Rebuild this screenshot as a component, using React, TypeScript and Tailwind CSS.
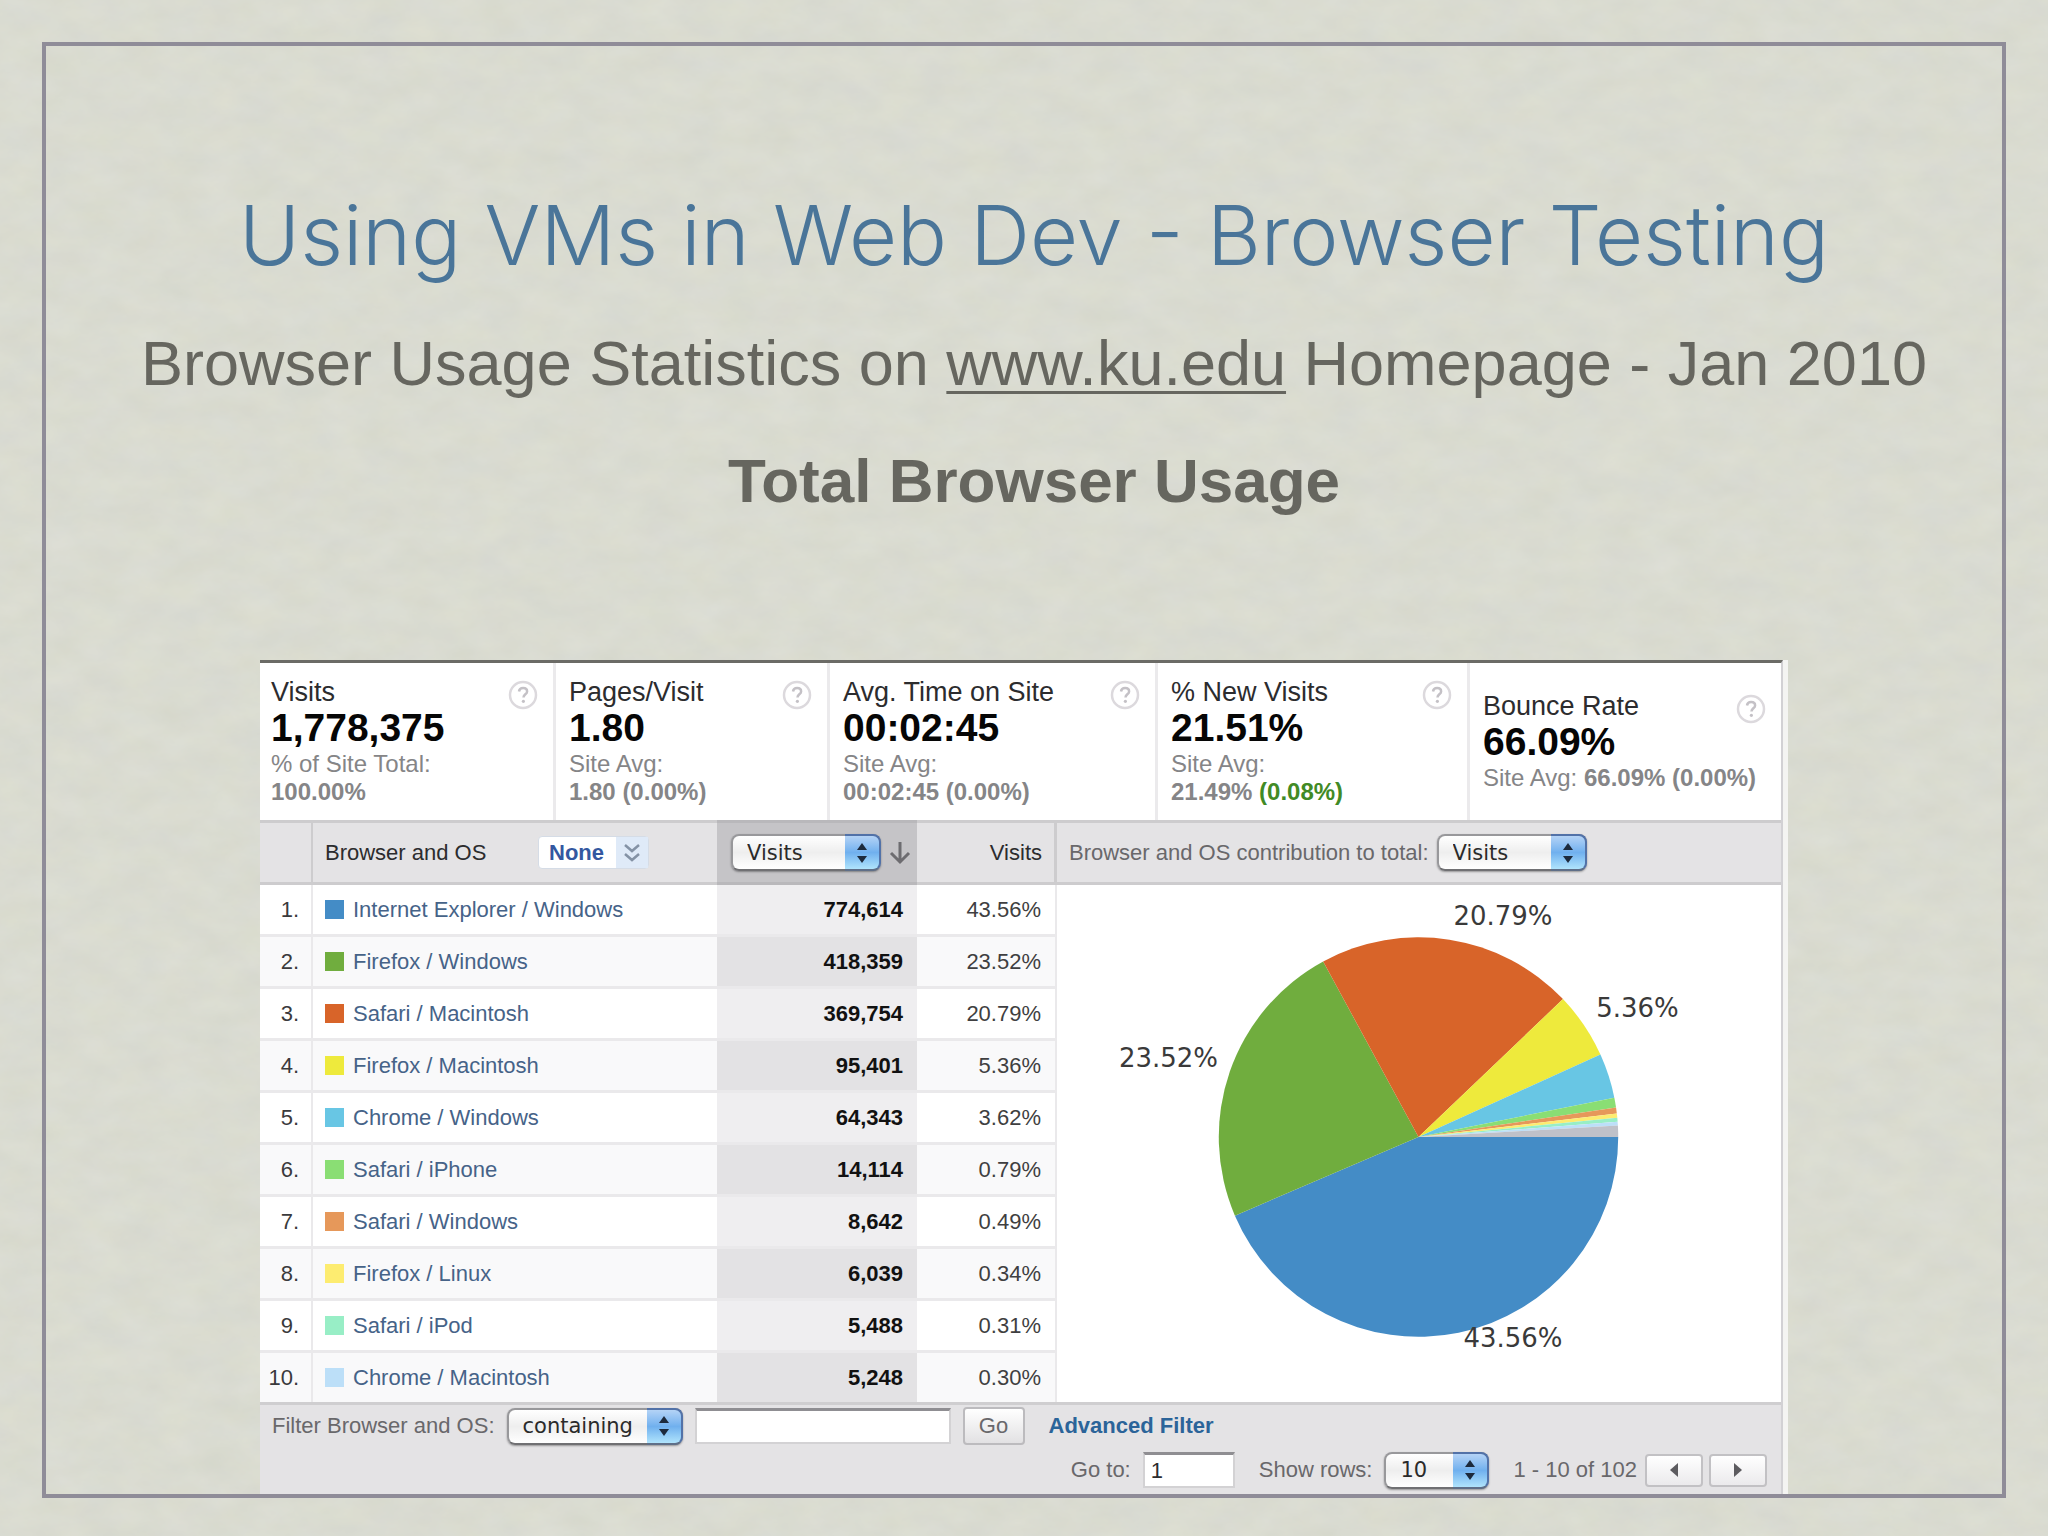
import type { ReactNode } from "react";
import { useState } from "react";

const rows = [
  { name: "Internet Explorer / Windows", visits: "774,614", share: 43.56, color: "#448cc6" },
  { name: "Firefox / Windows", visits: "418,359", share: 23.52, color: "#70ad3e" },
  { name: "Safari / Macintosh", visits: "369,754", share: 20.79, color: "#d86429" },
  { name: "Firefox / Macintosh", visits: "95,401", share: 5.36, color: "#eeea3c" },
  { name: "Chrome / Windows", visits: "64,343", share: 3.62, color: "#68c6e4" },
  { name: "Safari / iPhone", visits: "14,114", share: 0.79, color: "#8ade74" },
  { name: "Safari / Windows", visits: "8,642", share: 0.49, color: "#e6985a" },
  { name: "Firefox / Linux", visits: "6,039", share: 0.34, color: "#fdec70" },
  { name: "Safari / iPod", visits: "5,488", share: 0.31, color: "#98eec6" },
  { name: "Chrome / Macintosh", visits: "5,248", share: 0.3, color: "#bcdff8" },
];

function PaperTexture() {
  return (
    <svg className="pointer-events-none absolute inset-0 h-full w-full" aria-hidden="true">
      <filter id="paper" x="0" y="0" width="100%" height="100%" colorInterpolationFilters="sRGB">
        <feTurbulence type="fractalNoise" baseFrequency="0.025 0.04" numOctaves="4" seed="7" />
        <feColorMatrix values="0.035 0.01 0 0 0.831  0.035 0 0 0 0.842  0.025 0 0.03 0 0.791  0 0 0 0 1" />
      </filter>
      <rect width="100%" height="100%" filter="url(#paper)" />
    </svg>
  );
}

function HelpButton({ topic }: { topic: string }) {
  return (
    <button type="button" aria-label={"Help: " + topic} className="mt-0.5 shrink-0">
      <svg width="30" height="30" viewBox="0 0 30 30" fill="none" aria-hidden="true">
        <circle cx="15" cy="15" r="13" stroke="#dcd9dd" strokeWidth="2.5" />
        <path
          d="M11 11.5c.3-2.4 2-3.5 4.100-3.500 2.300 0 4 1.300 4 3.400 0 2.800-3.600 3-3.600 6"
          stroke="#c4c1c6"
          strokeWidth="2.500"
        />
        <circle cx="15.400" cy="21.300" r="1.600" fill="#c4c1c6" />
      </svg>
    </button>
  );
}

function Stat({
  label,
  value,
  className,
  children,
}: {
  label: string;
  value: string;
  className: string;
  children: ReactNode;
}) {
  return (
    <section className={"flex flex-col justify-center pr-[15px] " + className}>
      <div className="flex h-7 items-start justify-between">
        <h3 className="text-[27px] leading-7 whitespace-nowrap text-[#2c2c2e]">{label}</h3>
        <HelpButton topic={label} />
      </div>
      <p className="text-[39px] leading-11 font-bold text-[#060606]">{value}</p>
      <div className="text-2xl leading-7 whitespace-nowrap text-[#858587]">{children}</div>
    </section>
  );
}

function PopupSelect({
  label,
  options,
  className,
}: {
  label: string;
  options: string[];
  className: string;
}) {
  return (
    <span className={"relative inline-block h-[37px] shrink-0 " + className}>
      <select
        aria-label={label}
        className="h-full w-full appearance-none rounded-lg border-2 border-[#98989b] border-b-[#707073] bg-linear-to-b from-white via-[#eeeeee] to-white pl-3.5 font-['DejaVu_Sans',sans-serif] text-[21px] leading-7 text-[#2a2a2a] shadow-[0_1px_2px_rgba(0,0,0,0.35)]"
      >
        {options.map((o) => (
          <option key={o}>{o}</option>
        ))}
      </select>
      <span className="pointer-events-none absolute inset-y-0 right-0 flex w-9 items-center justify-center rounded-r-lg border-2 border-l-0 border-[#5272a8] border-b-[#5f6f88] bg-linear-to-b from-[#b4d3f6] via-[#70b0ee] to-[#b0e4fc]">
        <svg width="12" height="22" viewBox="0 0 12 22" aria-hidden="true">
          <path d="M6 1l5 7H1z" fill="#1d2a3c" />
          <path d="M6 21l5-7H1z" fill="#1d2a3c" />
        </svg>
      </span>
    </span>
  );
}

const CX = 362;
const CY = 252;
const R = 200;

function point(fraction: number) {
  const a = fraction * 2 * Math.PI;
  return `${CX + R * Math.cos(a)} ${CY + R * Math.sin(a)}`;
}

const slices = [...rows, { name: "Other", share: 0.92, color: "#bfc1c9" }];

function PieChart() {
  let start = 0;
  return (
    <svg
      viewBox="0 0 725 516"
      className="h-[516px] w-full"
      role="img"
      aria-label="Browser and OS contribution to total visits"
    >
      {slices.map((s) => {
        const from = start;
        start += s.share / 100;
        return (
          <path
            key={s.name}
            fill={s.color}
            d={`M${CX} ${CY}L${point(from)}A${R} ${R} 0 0 1 ${point(start)}Z`}
          />
        );
      })}
      <g className="font-['DejaVu_Sans',sans-serif] text-[26px]" fill="#3a3a3a">
        <text x="397" y="40">20.79%</text>
        <text x="540" y="132">5.36%</text>
        <text x="62" y="182">23.52%</text>
        <text x="407" y="462">43.56%</text>
      </g>
    </svg>
  );
}

function BrowserTable() {
  return (
    <table className="w-[797px] shrink-0 table-fixed border-separate border-spacing-0">
      <colgroup>
        <col className="w-[53px]" />
        <col className="w-[404px]" />
        <col className="w-[200px]" />
        <col className="w-[140px]" />
      </colgroup>
      <thead>
        <tr className="h-[65px] bg-[#e4e3e5] text-[#2c2c2e]">
          <th className="border-y-3 border-r-2 border-[#cdccce]" aria-label="Rank" />
          <th className="border-y-3 border-[#cdccce] p-0 font-normal">
            <div className="flex items-center pr-[68px] pl-3">
              <span>Browser and OS</span>
              <button
                type="button"
                className="ml-auto flex h-[33px] w-[111px] items-center justify-between rounded-sm border border-[#d5dce6] bg-white pl-2.5 font-bold text-[#3357a0]"
              >
                None
                <span className="flex h-full w-8 items-center justify-center bg-[#dfeaf8]">
                  <svg width="16" height="20" viewBox="0 0 16 20" fill="none" stroke="#8492a5" strokeWidth="2.500" aria-hidden="true">
                    <path d="M1 2l7 6 7-6M1 11l7 6 7-6" />
                  </svg>
                </span>
              </button>
            </div>
          </th>
          <th className="border-y-3 border-[#b9b8bb] bg-[#c5c4c7] p-0 font-normal">
            <div className="flex items-center gap-2 pl-3.5">
              <PopupSelect label="Metric" options={["Visits"]} className="w-[150px]" />
              <svg width="22" height="24" viewBox="0 0 22 24" fill="none" stroke="#6d6c70" strokeWidth="3" aria-hidden="true">
                <path d="M11 1v20M2 12l9 9 9-9" />
              </svg>
            </div>
          </th>
          <th className="border-y-3 border-r-3 border-[#cdccce] py-0 pr-3 pl-0 text-right font-normal">
            Visits
          </th>
        </tr>
      </thead>
      <tbody>
        {rows.map((r, i) => (
          <tr
            key={r.name}
            className="group h-[52px] odd:bg-white even:bg-[#f9f9fa] last:h-[49px] *:border-b-3 *:border-[#eae9eb] *:p-0 last:*:border-b-0"
          >
            <td className="border-r-2">
              <div className="pr-3 text-right text-[#3a3a3c]">{i + 1}.</div>
            </td>
            <td>
              <div className="flex items-center gap-[9px] pl-3">
                <span className="size-[19px]" style={{ backgroundColor: r.color }} />
                <a href="#" className="whitespace-nowrap text-[#466388]">
                  {r.name}
                </a>
              </div>
            </td>
            <td className="text-[#111111] group-odd:bg-[#efeef0] group-even:bg-[#e3e2e4]">
              <div className="pr-3.5 text-right font-bold">{r.visits}</div>
            </td>
            <td className="border-r-2">
              <div className="pr-3.5 text-right text-[#3f3f41]">{r.share.toFixed(2)}%</div>
            </td>
          </tr>
        ))}
      </tbody>
    </table>
  );
}

function Footer() {
  const [filter, setFilter] = useState("");
  const [page, setPage] = useState("1");
  const field =
    "h-9 border-2 border-[#d3d2d4] border-t-[3px] border-t-[#8f8e92] bg-white px-1.5 text-[#2c2c2e]";
  const pager =
    "flex h-[33px] w-[58px] items-center justify-center rounded-sm border-2 border-[#c2c1c4] bg-linear-to-b from-white to-[#ebeaec]";
  return (
    <footer className="border-t-3 border-[#cfced0] bg-[#e4e3e5] pb-px text-[#69686b]">
      <div className="flex h-[42px] items-center pl-3">
        <label htmlFor="filter">Filter Browser and OS:</label>
        <PopupSelect label="Filter type" options={["containing", "excluding"]} className="ml-3 w-[176px]" />
        <input
          id="filter"
          type="text"
          value={filter}
          onChange={(e) => setFilter(e.target.value)}
          className={"ml-3 w-[256px] " + field}
        />
        <button
          type="button"
          className="ml-3 h-[38px] w-[62px] rounded-sm border-2 border-[#bcbbbe] bg-linear-to-b from-white to-[#e2e1e3]"
        >
          Go
        </button>
        <a href="#" className="ml-6 font-bold text-[#2b6499]">
          Advanced Filter
        </a>
      </div>
      <div className="flex h-[46px] items-center justify-end pr-3.5">
        <label htmlFor="page">Go to:</label>
        <input
          id="page"
          type="text"
          value={page}
          onChange={(e) => setPage(e.target.value)}
          className={"ml-3 w-[92px] " + field}
        />
        <span className="ml-6">Show rows:</span>
        <PopupSelect label="Rows per page" options={["10", "25", "50"]} className="ml-3 w-[105px]" />
        <span className="ml-6">1 - 10 of 102</span>
        <button type="button" aria-label="Previous page" className={"ml-2 " + pager}>
          <svg width="10" height="14" viewBox="0 0 10 14" aria-hidden="true">
            <path d="M9 0v14L1 7z" fill="#5c5b5f" />
          </svg>
        </button>
        <button type="button" aria-label="Next page" className={"ml-1.5 " + pager}>
          <svg width="10" height="14" viewBox="0 0 10 14" aria-hidden="true">
            <path d="M1 0v14l8-7z" fill="#5c5b5f" />
          </svg>
        </button>
      </div>
    </footer>
  );
}

export default function App() {
  return (
    <main className="relative flex min-h-screen flex-col bg-[#d9dbcf] px-[42px] pt-[42px] pb-[38px] font-['Liberation_Sans',Arial,sans-serif]">
      <PaperTexture />
      <div className="relative flex grow flex-col items-center border-4 border-[#8f8c98]">
        <header className="pt-[135px] pl-5 text-center whitespace-nowrap text-[#66665f]">
          <h1 className="font-[Inter,sans-serif] text-[83px] leading-[108px] font-light text-[#4a7599]">
            Using VMs in Web Dev - Browser Testing
          </h1>
          <p className="mt-[38px] text-[63px] leading-[72px]">
            Browser Usage Statistics on{" "}
            <a href="#" className="underline decoration-3 underline-offset-6">
              www.ku.edu
            </a>{" "}
            Homepage - Jan 2010
          </p>
          <h2 className="mt-[46px] text-[62px] leading-[72px] font-bold">Total Browser Usage</h2>
        </header>

        <div className="mt-auto w-full max-w-[1528px] border-r-5 border-[#f4f4f2] text-[22px] leading-7">
          <div className="border-t-3 border-r-2 border-t-[#6b6b66] border-r-[#d2d1d4] bg-white">
            <div className="flex h-[157px]">
              <Stat label="Visits" value="1,778,375" className="w-[293px] pl-[11px]">
                <p>% of Site Total:</p>
                <p className="font-bold">100.00%</p>
              </Stat>
              <Stat label="Pages/Visit" value="1.80" className="w-[274px] border-l-3 border-[#ebeaec] pl-[13px]">
                <p>Site Avg:</p>
                <p className="font-bold">1.80 (0.00%)</p>
              </Stat>
              <Stat label="Avg. Time on Site" value="00:02:45" className="w-[328px] border-l-3 border-[#ebeaec] pl-[13px]">
                <p>Site Avg:</p>
                <p className="font-bold">00:02:45 (0.00%)</p>
              </Stat>
              <Stat label="% New Visits" value="21.51%" className="w-[312px] border-l-3 border-[#ebeaec] pl-[13px]">
                <p>Site Avg:</p>
                <p className="font-bold">
                  21.49% <span className="text-[#418a25]">(0.08%)</span>
                </p>
              </Stat>
              <Stat label="Bounce Rate" value="66.09%" className="grow border-l-3 border-[#ebeaec] pl-[13px]">
                <p>
                  Site Avg: <strong>66.09% (0.00%)</strong>
                </p>
              </Stat>
            </div>
            <div className="flex">
              <BrowserTable />
              <section className="flex grow flex-col">
                <div className="flex h-[65px] items-center border-y-3 border-[#cdccce] bg-[#e4e3e5] pl-3 text-[#69686b]">
                  <span>Browser and OS contribution to total:</span>
                  <PopupSelect label="Chart metric" options={["Visits"]} className="ml-2 w-[150px]" />
                </div>
                <PieChart />
              </section>
            </div>
            <Footer />
          </div>
        </div>
      </div>
    </main>
  );
}
